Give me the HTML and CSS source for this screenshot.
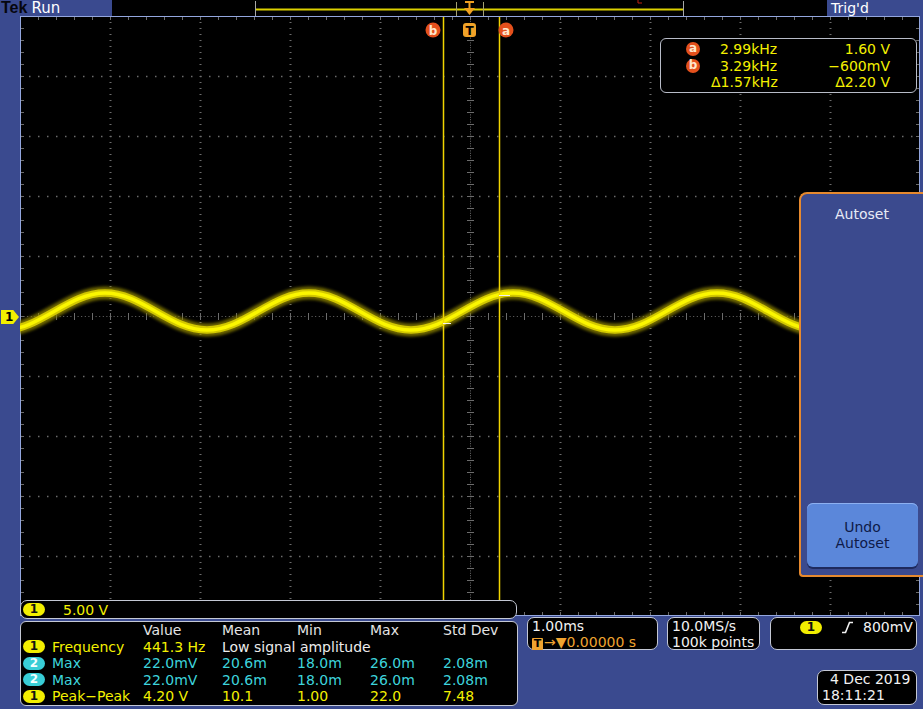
FILE: index.html
```html
<!DOCTYPE html>
<html>
<head>
<meta charset="utf-8">
<title>Tek scope</title>
<link rel="stylesheet" href="styles.css">
</head>
<body>
<div class="scope">
  <div class="topbar">
    <div class="status"><span class="tek">Tek</span><span class="run">Run</span></div>
    <div class="record">
      <svg width="715" height="16" viewBox="0 0 715 16">
        <line x1="143" y1="9.5" x2="571" y2="9.5" stroke="#dcd000" stroke-width="2"/>
        <line x1="143.5" y1="1" x2="143.5" y2="16" stroke="#a8a8a8"/>
        <line x1="571.5" y1="1" x2="571.5" y2="16" stroke="#a8a8a8"/>
        <line x1="344.5" y1="2" x2="344.5" y2="16" stroke="#a4a070"/>
        <line x1="371.5" y1="2" x2="371.5" y2="16" stroke="#a4a070"/>
        <rect x="353" y="1" width="9" height="2" fill="#f0a020"/>
        <rect x="356.5" y="3" width="2" height="5" fill="#f0a020"/>
        <polygon points="352,8 363,8 357.5,15" fill="#f0a020"/>
        <path d="M526 0v3h4" stroke="#c02010" fill="none"/>
      </svg>
    </div>
    <div class="trigd">Trig'd</div>
  </div>

  <div class="middle">
    <div class="lstrip"><div class="chmark">1</div></div>
    <div class="screen">
      <svg class="grat" width="900" height="600" viewBox="0 0 900 600">
        <defs>
          <path id="wave" d="M-170 295.5c16.63 -9.48 32.54 -18.5 51 -18.5s34.37 9.02 51 18.5s32.54 18.5 51 18.5s34.37 -9.02 51 -18.5s32.54 -18.5 51 -18.5s34.37 9.02 51 18.5s32.54 18.5 51 18.5s34.37 -9.02 51 -18.5s32.54 -18.5 51 -18.5s34.37 9.02 51 18.5s32.54 18.5 51 18.5s34.37 -9.02 51 -18.5s32.54 -18.5 51 -18.5s34.37 9.02 51 18.5s32.54 18.5 51 18.5s34.37 -9.02 51 -18.5s32.54 -18.5 51 -18.5s34.37 9.02 51 18.5s32.54 18.5 51 18.5s34.37 -9.02 51 -18.5"/>
          <filter id="glow" x="-5%" y="-50%" width="110%" height="200%">
            <feGaussianBlur stdDeviation="1.8"/>
          </filter>
        </defs>
        <g stroke="#6c6c6c" fill="none">
          <path d="M90.5 0V600M180.5 0V600M270.5 0V600M360.5 0V600M540.5 0V600M630.5 0V600M720.5 0V600M810.5 0V600" stroke-width="2" stroke-dasharray="1 5"/>
          <path d="M0 60.5H900M0 120.5H900M0 180.5H900M0 240.5H900M0 360.5H900M0 420.5H900M0 480.5H900M0 540.5H900" stroke-width="1.5" stroke-dasharray="1.5 7.5"/>
          <path d="M450.5 0V600" stroke-dasharray="1 1.4"/>
          <path d="M0 300.5H900" stroke-dasharray="1 2.6"/>
          <path d="M450.5 0V600" stroke-width="7" stroke-dasharray="1 11"/>
          <path d="M0 300.5H900" stroke-width="7" stroke-dasharray="1 17"/>
          <path d="M0 0H900M0 600H900" stroke-width="8" stroke-dasharray="1 17"/>
          <path d="M0 0V600M900 0V600" stroke-width="8" stroke-dasharray="1 11"/>
        </g>
        <rect x="0.5" y="0.5" width="899" height="599" fill="none" stroke="#93a6de"/>
        <g fill="none">
          <use href="#wave" stroke="#8c8200" stroke-width="13" opacity="0.8" filter="url(#glow)"/>
          <use href="#wave" stroke="#d2c800" stroke-width="7.5"/>
          <use href="#wave" stroke="#fbf600" stroke-width="3.5"/>
        </g>
        <line x1="423.5" y1="1" x2="423.5" y2="584" stroke="#f0d400" stroke-width="1.5"/>
        <line x1="479.5" y1="1" x2="479.5" y2="584" stroke="#f0d400" stroke-width="1.5"/>
        <line x1="423" y1="307.5" x2="431" y2="307.5" stroke="#f0f0f0"/>
        <line x1="479" y1="279.5" x2="490" y2="279.5" stroke="#f0f0f0"/>
        <circle cx="413" cy="14" r="7.5" fill="#e4501c"/>
        <text x="413" y="18.5" class="clabel">b</text>
        <circle cx="486" cy="14" r="7.5" fill="#e4501c"/>
        <text x="486" y="18.5" class="clabel">a</text>
        <rect x="443" y="7" width="13" height="14" rx="3" fill="#f0a228"/>
        <text x="449.5" y="19" class="tlabel">T</text>
      </svg>

      <div class="readout">
        <div class="rrow"><span class="cbadge">a</span><span class="rval">2.99kHz</span><span class="rright">1.60 V</span></div>
        <div class="rrow"><span class="cbadge">b</span><span class="rval">3.29kHz</span><span class="rright">−600mV</span></div>
        <div class="rrow"><span class="cspacer"></span><span class="rval delta">Δ1.57kHz</span><span class="rright">Δ2.20 V</span></div>
      </div>

      <div class="autoset">
        <div class="as-title">Autoset</div>
        <div class="undo"><span>Undo</span><span>Autoset</span></div>
      </div>

      <div class="scalebar"><span class="pill yellow">1</span><span class="scaleval">5.00 V</span></div>
    </div>
  </div>

  <div class="footer">
    <div class="meas">
      <div class="mrow head"><span></span><span></span><span>Value</span><span>Mean</span><span>Min</span><span>Max</span><span>Std Dev</span></div>
      <div class="mrow ch1"><span class="pill yellow">1</span><span>Frequency</span><span>441.3 Hz</span><span class="span4">Low signal amplitude</span></div>
      <div class="mrow ch2"><span class="pill cyan">2</span><span>Max</span><span>22.0mV</span><span>20.6m</span><span>18.0m</span><span>26.0m</span><span>2.08m</span></div>
      <div class="mrow ch2"><span class="pill cyan">2</span><span>Max</span><span>22.0mV</span><span>20.6m</span><span>18.0m</span><span>26.0m</span><span>2.08m</span></div>
      <div class="mrow ch1"><span class="pill yellow">1</span><span>Peak−Peak</span><span>4.20 V</span><span>10.1</span><span>1.00</span><span>22.0</span><span>7.48</span></div>
    </div>
    <div class="box timebase">
      <div>1.00ms</div>
      <div class="orange"><span class="tbox">T</span>→▼0.00000 s</div>
    </div>
    <div class="box sample">
      <div>10.0MS/s</div>
      <div>100k points</div>
    </div>
    <div class="rcol">
      <div class="box trig">
        <span class="pill yellow">1</span>
        <svg class="slope" width="12" height="13" viewBox="0 0 12 13"><path d="M0 11.5H3.5L7.5 1.5H11" fill="none" stroke="#f0f0f0" stroke-width="1.6"/></svg>
        <span class="trigval">800mV</span>
      </div>
      <div class="box date">
        <div class="dline">4 Dec 2019</div>
        <div class="tline">18:11:21</div>
      </div>
    </div>
  </div>
</div>
</body>
</html>
```

FILE: styles.css
```css
html, body {
  margin: 0;
  padding: 0;
  overflow: hidden;
}

body {
  background: #3a4a8f;
  font-family: "DejaVu Sans", "Noto Sans", sans-serif;
  font-size: 14px;
  color: #f0f0f0;
}

.scope {
  width: 923px;
  height: 709px;
  position: relative;
}

/* ---------- top bar ---------- */
.topbar {
  display: flex;
  height: 16px;
  line-height: 16px;
}

.status {
  width: 112px;
  display: flex;
  align-items: center;
  padding-left: 1px;
  box-sizing: border-box;
}

.tek {
  font-family: "Liberation Sans", Arial, sans-serif;
  font-weight: bold;
  color: #06060e;
  font-size: 16px;
  line-height: 16px;
  margin-right: 4px;
}

.run {
  color: #ffffff;
  font-size: 15px;
}

.record {
  width: 715px;
  background: #000;
}

.record svg {
  display: block;
}

.trigd {
  flex: 1;
  color: #ffffff;
  padding-left: 4px;
  font-size: 14px;
}

/* ---------- middle ---------- */
.middle {
  display: flex;
  height: 600px;
}

.lstrip {
  width: 20px;
  position: relative;
}

.chmark {
  position: absolute;
  left: 1px;
  top: 294px;
  width: 18px;
  height: 14px;
  background: #f2ee00;
  color: #000;
  font-size: 12px;
  font-weight: bold;
  line-height: 14px;
  padding-left: 4px;
  box-sizing: border-box;
  clip-path: polygon(0 0, 68% 0, 100% 50%, 68% 100%, 0 100%);
}

.screen {
  width: 900px;
  position: relative;
  background: #000;
}

.grat {
  display: block;
}

.clabel {
  font-family: "DejaVu Sans", sans-serif;
  font-size: 12px;
  font-weight: bold;
  fill: #ffe6cc;
  text-anchor: middle;
}

.tlabel {
  font-family: "DejaVu Sans", sans-serif;
  font-size: 12px;
  font-weight: bold;
  fill: #000;
  text-anchor: middle;
}

/* cursor readout */
.readout {
  position: absolute;
  left: 640px;
  top: 22px;
  width: 257px;
  height: 55px;
  box-sizing: border-box;
  border: 1px solid #b8bcc8;
  border-radius: 6px;
  background: #000;
  padding-top: 2px;
  color: #f4f000;
}

.rrow {
  display: flex;
  align-items: center;
  height: 16.5px;
  line-height: 16.5px;
}

.cbadge,
.cspacer {
  width: 14px;
  height: 14px;
  margin-left: 25px;
  margin-right: 20px;
  flex: none;
}

.cbadge {
  border-radius: 50%;
  background: #e4501c;
  color: #ffe6cc;
  font-size: 12px;
  font-weight: bold;
  line-height: 13px;
  text-align: center;
}

.rval {
  width: 100px;
}

.rval.delta {
  margin-left: -9px;
  width: 109px;
}

.rright {
  flex: 1;
  text-align: right;
  padding-right: 26px;
}

/* autoset side menu */
.autoset {
  position: absolute;
  left: 779px;
  top: 176px;
  width: 124px;
  height: 385px;
  box-sizing: border-box;
  border: 2px solid #e6892e;
  border-right: none;
  border-radius: 8px 0 0 4px;
  background: #3b4a8e;
  display: flex;
  flex-direction: column;
}

.as-title {
  text-align: center;
  color: #e8eaf6;
  padding-top: 12px;
  line-height: 17px;
}

.undo {
  margin: auto 5px 8px 6px;
  height: 64px;
  background: #5b87da;
  border-radius: 6px;
  box-shadow: inset 0 1px 0 #8db0f0, 0 2px 0 #1e2a5e;
  color: #0e1a48;
  display: flex;
  flex-direction: column;
  justify-content: center;
  align-items: center;
  line-height: 16px;
}

/* vertical scale bar */
.scalebar {
  position: absolute;
  left: 0;
  top: 584px;
  width: 497px;
  height: 19px;
  box-sizing: border-box;
  border: 1px solid #c4c8d4;
  border-radius: 7px;
  background: #000;
  display: flex;
  align-items: center;
  padding-left: 2px;
}

.scaleval {
  margin-left: 18px;
  color: #f4f000;
  line-height: 16px;
}

/* pills */
.pill {
  display: inline-block;
  width: 22px;
  height: 13px;
  border-radius: 7px;
  font-size: 12px;
  font-weight: bold;
  line-height: 13px;
  text-align: center;
  flex: none;
}

.pill.yellow {
  background: #f2ee00;
  color: #111;
}

.pill.cyan {
  background: #38cdd6;
  color: #f4ffff;
}

/* ---------- footer ---------- */
.footer {
  display: flex;
  align-items: flex-start;
  padding-left: 20px;
  height: 93px;
}

.meas {
  width: 498px;
  height: 85px;
  box-sizing: border-box;
  margin-top: 5px;
  border: 1px solid #c4c8d4;
  border-radius: 6px;
  background: #000;
}

.mrow {
  display: grid;
  grid-template-columns: 29px 91px 79px 75px 73px 73px 1fr;
  align-items: center;
  height: 16.5px;
  line-height: 16.5px;
  padding-left: 2px;
  white-space: nowrap;
}

.mrow.head {
  color: #e4e4e4;
}

.mrow.ch1 {
  color: #f4f000;
}

.mrow.ch2 {
  color: #3ed4dc;
}

.span4 {
  grid-column: span 4;
  color: #ececec;
}

.box {
  box-sizing: border-box;
  border: 1px solid #c4c8d4;
  border-radius: 7px;
  background: #000;
  color: #f2f2f2;
  line-height: 15.5px;
}

.timebase {
  margin-left: 9px;
  margin-top: 1px;
  width: 131px;
  height: 33px;
  padding: 1px 0 0 4px;
}

.orange {
  color: #f0a430;
}

.tbox {
  display: inline-block;
  width: 11px;
  height: 12px;
  line-height: 12px;
  background: #f0a430;
  color: #000;
  font-size: 11px;
  font-weight: bold;
  text-align: center;
  border-radius: 1px;
  margin-right: 1px;
}

.sample {
  margin-left: 9px;
  margin-top: 1px;
  width: 93px;
  height: 33px;
  padding: 1px 0 0 4px;
}

.rcol {
  margin-left: 10px;
  width: 147px;
  display: flex;
  flex-direction: column;
  align-items: flex-end;
}

.trig {
  margin-top: 1px;
  width: 147px;
  height: 33px;
  display: flex;
  align-items: flex-start;
  padding: 2px 0 0 29px;
}

.trig .pill {
  margin-top: 1px;
}

.slope {
  margin-left: 20px;
  margin-top: 1px;
}

.trigval {
  margin-left: 9px;
}

.date {
  margin-top: 20px;
  width: 100px;
  height: 35px;
  padding-top: 1px;
}

.dline {
  padding-left: 12px;
}

.tline {
  padding-left: 4px;
}
```
